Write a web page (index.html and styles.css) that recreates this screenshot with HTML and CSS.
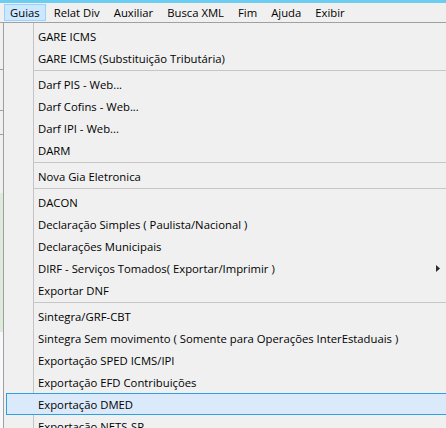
FILE: index.html
```html
<!DOCTYPE html>
<html lang="pt-BR">
<head>
    <meta charset="UTF-8">
    <meta name="viewport" content="width=device-width, initial-scale=1.0">
    <title>Guias</title>
    <link rel="stylesheet" href="styles.css">
</head>
<body>
    <div class="window">
        <div class="accent"></div>

        <nav class="menubar">
            <span class="bar-item open">Guias</span>
            <span class="bar-item">Relat Div</span>
            <span class="bar-item">Auxiliar</span>
            <span class="bar-item">Busca XML</span>
            <span class="bar-item">Fim</span>
            <span class="bar-item">Ajuda</span>
            <span class="bar-item">Exibir</span>
        </nav>

        <div class="workspace">
            <!-- pedaço da janela que fica atrás do menu -->
            <div class="behind">
                <div class="seg" style="height: 46px"></div>
                <div class="rule"></div>
                <div class="seg" style="height: 40px"></div>
                <div class="rule"></div>
                <div class="seg" style="height: 23px"></div>
                <div class="rule"></div>
                <div class="seg" style="height: 58px"></div>
                <div class="seg green" style="height: 139px"></div>
                <div class="seg white"></div>
            </div>

            <div class="dropdown">
                <div class="item">GARE ICMS</div>
                <div class="item">GARE ICMS (Substituição Tributária)</div>
                <div class="sep"></div>
                <div class="item">Darf PIS - Web...</div>
                <div class="item">Darf Cofins - Web...</div>
                <div class="item">Darf IPI - Web...</div>
                <div class="item">DARM</div>
                <div class="sep"></div>
                <div class="item">Nova Gia Eletronica</div>
                <div class="sep"></div>
                <div class="item">DACON</div>
                <div class="item">Declaração Simples ( Paulista/Nacional )</div>
                <div class="item">Declarações Municipais</div>
                <div class="item">
                    DIRF - Serviços Tomados( Exportar/Imprimir )
                    <svg class="arrow" width="4" height="7" viewBox="0 0 4 7"><path d="M0 0 L4 3.5 L0 7 Z"/></svg>
                </div>
                <div class="item">Exportar DNF</div>
                <div class="sep"></div>
                <div class="item">Sintegra/GRF-CBT</div>
                <div class="item">Sintegra Sem movimento ( Somente para Operações InterEstaduais )</div>
                <div class="item">Exportação SPED ICMS/IPI</div>
                <div class="item">Exportação EFD Contribuições</div>
                <div class="item hover">Exportação DMED</div>
                <div class="item">Exportação NETS-SP</div>
            </div>
        </div>
    </div>
</body>
</html>
```

FILE: styles.css
```css
html,
body {
    margin: 0;
    padding: 0;
    overflow: hidden;
}

body {
    font-family: "Open Sans", "Noto Sans", sans-serif;
    font-size: 11.3px;
    color: #000;
    background-color: #f0f0f0;
}

.window {
    width: 446px;
    height: 428px;
    display: flex;
    flex-direction: column;
}

.accent {
    height: 3px;
    background-color: #6ccdf0;
}

/* barra de menu */
.menubar {
    height: 19px;
    display: flex;
    align-items: flex-start;
    gap: 2px;
    padding-left: 4px;
}

.bar-item {
    margin-top: 1px;
    height: 17px;
    line-height: 15px;
    padding: 0 5px;
    border: 1px solid transparent;
    box-sizing: border-box;
    white-space: nowrap;
}

.bar-item.open {
    background-color: #cce8ff;
    border-color: #99d1ff;
}

/* área abaixo da barra */
.workspace {
    flex: 1;
    display: flex;
    border-top: 1px solid #a0a0a0;
    min-height: 0;
}

.behind {
    width: 3px;
    flex-shrink: 0;
    display: flex;
    flex-direction: column;
}

.behind .rule {
    height: 1px;
    background-color: #a0a0a0;
}

.behind .green {
    background-color: #dcebda;
}

.behind .white {
    flex: 1;
    background-color: #f6f8fb;
}

/* menu suspenso (cortado na borda direita) */
.dropdown {
    flex: 1;
    min-width: 0;
    overflow: hidden;
    box-sizing: border-box;
    padding: 2px 0 0 2px;
    border-left: 1px solid #a0a0a0;
    background-color: #f0f0f0;
    background-image: linear-gradient(to right, transparent 29px, #c4c4c4 29px, #c4c4c4 30px, transparent 30px);
}

.item {
    height: 22px;
    box-sizing: border-box;
    display: flex;
    align-items: center;
    padding-left: 31px;
    border: 1px solid transparent;
    border-right: 0;
    white-space: nowrap;
}

.item.hover {
    background-color: #dbeafb;
    border-color: #2e9fe2;
}

.arrow {
    margin-left: auto;
    margin-right: 6px;
    fill: #2b2b2b;
}

.sep {
    height: 1px;
    margin: 1px 0 2px 27px;
    background-color: #c6c6c6;
}
```
